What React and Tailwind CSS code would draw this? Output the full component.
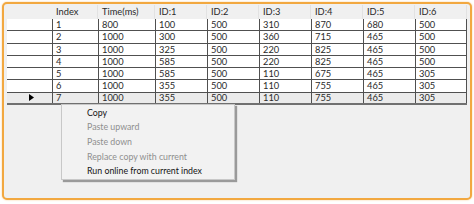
import React from "react";

const COLS = [
	{ key: "index", label: "Index", w: "w-[46px]" },
	{ key: "time", label: "Time(ms)", w: "w-[57px]" },
	{ key: "id1", label: "ID:1", w: "w-[52px]" },
	{ key: "id2", label: "ID:2", w: "w-[52px]" },
	{ key: "id3", label: "ID:3", w: "w-[52px]" },
	{ key: "id4", label: "ID:4", w: "w-[52px]" },
	{ key: "id5", label: "ID:5", w: "w-[52px]" },
	{ key: "id6", label: "ID:6", w: "w-[52px]" },
];

const ROWS = [
	["1", "800", "100", "500", "310", "870", "680", "500"],
	["2", "1000", "300", "500", "360", "715", "465", "500"],
	["3", "1000", "325", "500", "220", "825", "465", "500"],
	["4", "1000", "585", "500", "220", "825", "465", "500"],
	["5", "1000", "585", "500", "110", "675", "465", "305"],
	["6", "1000", "355", "500", "110", "755", "465", "305"],
	["7", "1000", "355", "500", "110", "755", "465", "305"],
];

const MENU = [
	{ label: "Copy", enabled: true },
	{ label: "Paste upward", enabled: false },
	{ label: "Paste down", enabled: false },
	{ label: "Replace copy with current", enabled: false },
	{ label: "Run online from current index", enabled: true },
];

function RowPointer() {
	return (
		<svg width="5" height="7" viewBox="0 0 5 7">
			<path d="M0 0 L5 3.5 L0 7 Z" fill="#000" />
		</svg>
	);
}

export default function App() {
	return (
		<div
			className="w-[474px] h-[204px] bg-white p-[2px] pb-[4px] text-[9.3px] text-[#2a2a2a]"
			style={{ fontFamily: "Lato, 'Noto Sans', sans-serif" }}
		>
			<div className="relative h-full border-2 border-[#f2a840] rounded-[5px] bg-[#f0f0f0] shadow-[0_0_2px_#f6c98a]">
				{/* grid */}
				<div className="ml-[3px] mt-[1px] w-[460px]">
					<div className="flex h-[14px]">
						<div className="w-[45px]" />
						{COLS.map((c) => (
							<div
								key={c.key}
								className={c.w + " flex items-center pl-[4px] border-r border-[#e2e2e2] leading-none"}
							>
								{c.label}
							</div>
						))}
					</div>
					{ROWS.map((r, i) => {
						const last = i === ROWS.length - 1;
						return (
							<div
								key={i}
								className={
									"flex h-[12.3px] " +
									(last
										? "border-b-2 border-[#707070] bg-[#ebebeb]"
										: "border-b border-[#505050] bg-white")
								}
							>
								<div className="w-[45px] flex items-center justify-center pl-[3px]">
									{last && <RowPointer />}
								</div>
								{r.map((v, j) => (
									<div
										key={j}
										className={
											COLS[j].w +
											" flex items-center pl-[3px] border-l border-[#505050] leading-none" +
											(j === r.length - 1 ? " border-r" : "")
										}
									>
										{v}
									</div>
								))}
							</div>
						);
					})}
				</div>

				{/* context menu */}
				<div className="absolute left-[57px] top-[100px] w-[174px] h-[76px] bg-[#f2f2f2] border border-[#c8c8c8] shadow-[2px_2px_1px_#9a9a9a] pt-[1px] text-[8.8px]">
					{MENU.map((m) => (
						<div
							key={m.label}
							className={
								"h-[14.6px] flex items-center pl-[25px] leading-none " +
								(m.enabled ? "text-[#141414]" : "text-[#8f8f8f]")
							}
						>
							{m.label}
						</div>
					))}
				</div>
			</div>
		</div>
	);
}
